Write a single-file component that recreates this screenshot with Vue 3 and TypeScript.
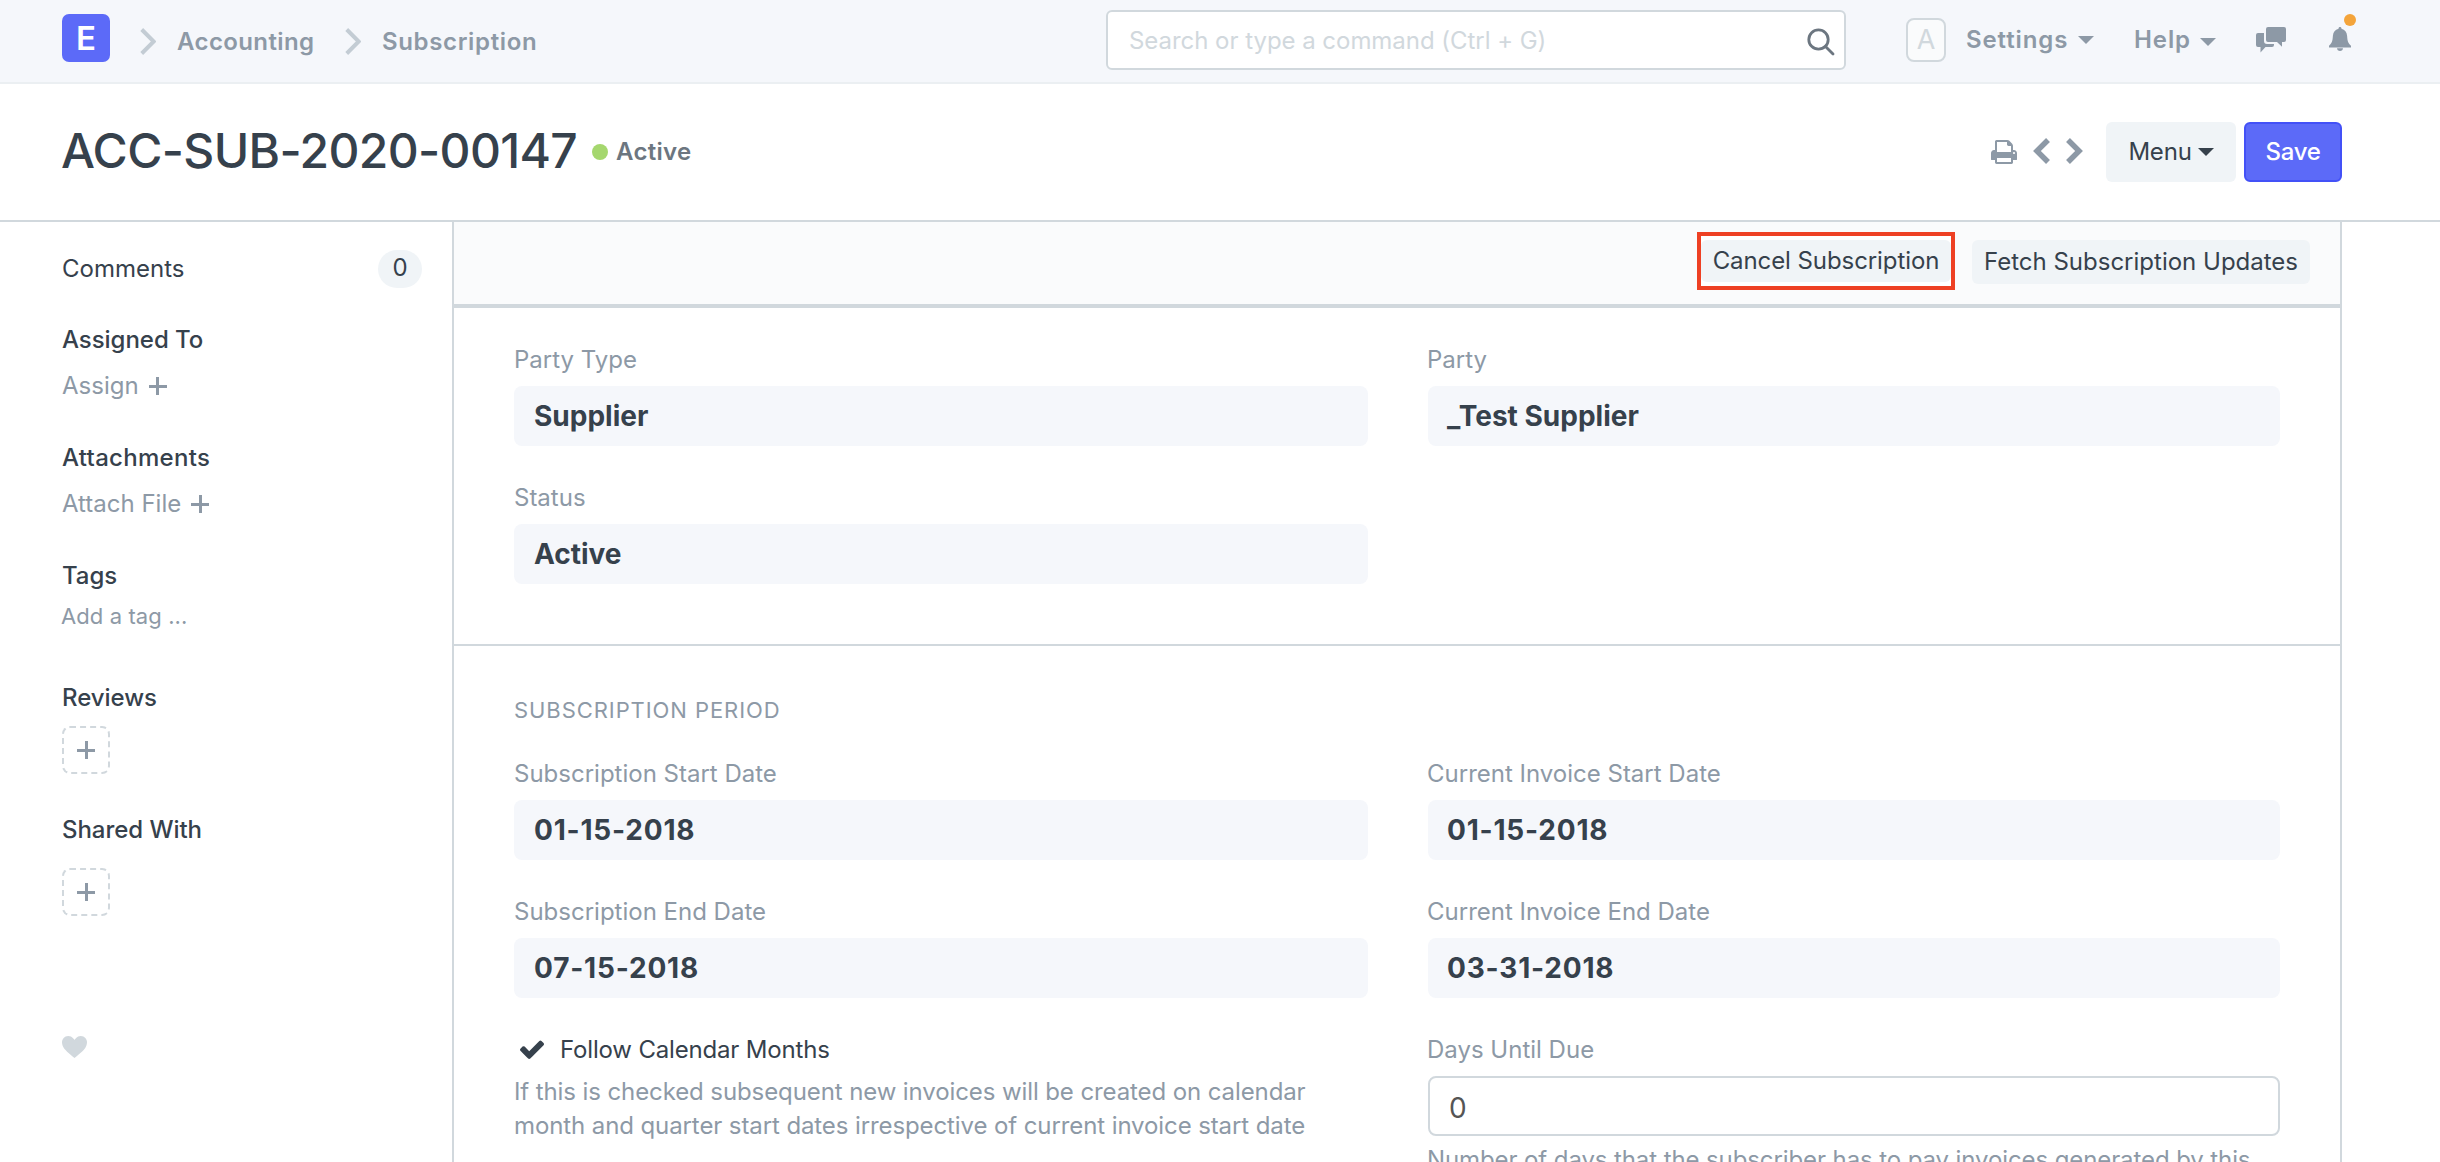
<script setup lang="ts">
interface Field {
  label: string
  value: string
}

const party: Field[] = [
  { label: 'Party Type', value: 'Supplier' },
  { label: 'Party', value: '_Test Supplier' },
  { label: 'Status', value: 'Active' },
]

const period: Field[] = [
  { label: 'Subscription Start Date', value: '01-15-2018' },
  { label: 'Current Invoice Start Date', value: '01-15-2018' },
  { label: 'Subscription End Date', value: '07-15-2018' },
  { label: 'Current Invoice End Date', value: '03-31-2018' },
]
</script>

<template>
  <div class="page">
    <header class="navbar">
      <div class="logo">E</div>
      <svg class="crumb-sep" width="16" height="27" viewBox="0 0 16 27"><path d="M1.700 1.500 13.700 13.500 1.700 25.500" /></svg>
      <a class="crumb first">Accounting</a>
      <svg class="crumb-sep" width="16" height="27" viewBox="0 0 16 27"><path d="M1.700 1.500 13.700 13.500 1.700 25.500" /></svg>
      <a class="crumb">Subscription</a>
      <div class="search">
        <span>Search or type a command (Ctrl + G)</span>
        <svg width="28" height="28" viewBox="0 0 28 28"><circle cx="11.500" cy="11.500" r="9.700" /><path d="M18.500 18.500 26 26" /></svg>
      </div>
      <nav class="tools">
        <span class="avatar">A</span>
        <span class="tool settings">Settings<i class="caret" /></span>
        <span class="tool help">Help<i class="caret low" /></span>
        <svg class="chat" width="30" height="26" viewBox="0 0 30 26">
          <path d="M12 0h16a2 2 0 0 1 2 2v11a2 2 0 0 1-2 2h-2v4.700L21 15h-9a2 2 0 0 1-2-2V2a2 2 0 0 1 2-2z" />
          <path d="M2 6h6v8a3 3 0 0 0 3 3h7v1a2 2 0 0 1-2 2h-6.500l-5 5.500V20H2a2 2 0 0 1-2-2V8a2 2 0 0 1 2-2z" />
        </svg>
        <span class="bell">
          <svg width="22" height="24" viewBox="0 0 22 24">
            <path d="M11 0c.9 0 1.500.7 1.500 1.700 3.400.8 5.300 3.500 5.600 7 .4 5.200.8 7.300 3.900 10v1.800H0v-1.800c3.100-2.700 3.500-4.800 3.900-10 .3-3.500 2.200-6.200 5.600-7C9.500.7 10.100 0 11 0z" />
            <path d="M8 21.200h6c0 1.600-1.300 2.800-3 2.800s-3-1.200-3-2.800z" />
          </svg>
          <i class="dot" />
        </span>
      </nav>
    </header>

    <div class="page-head">
      <h1>ACC-SUB-2020-00147</h1>
      <span class="status"><i />Active</span>
      <div class="actions">
        <svg class="print" width="26" height="24" viewBox="0 128 1664 1536"><path d="M384 1536h896v-256H384v256zm0-640h896V512h-160q-40 0-68-28t-28-68V256H384v640zm1152 64q0-26-19-45t-45-19-45 19-19 45 19 45 45 19 45-19 19-45zm128 0v416q0 13-9.500 22.500t-22.500 9.500h-224v160q0 40-28 68t-68 28H352q-40 0-68-28t-28-68v-160H32q-13 0-22.500-9.500T0 1376V960q0-79 56.500-135.500T192 768h64V224q0-40 28-68t68-28h672q40 0 88 20t76 48l152 152q28 28 48 76t20 88v256h64q79 0 135.500 56.500T1664 960z" /></svg>
        <svg class="prev" width="17" height="26" viewBox="0.500 3 6.500 10"><path d="M5.500 3 7 4.500 3.500 8 7 11.500 5.500 13l-5-5z" /></svg>
        <svg class="next" width="17" height="26" viewBox="0.500 3 6.500 10"><path d="M2 3 .5 4.500 4 8 .5 11.500 2 13l5-5z" /></svg>
        <button class="btn menu">Menu<i class="caret" /></button>
        <button class="btn save">Save</button>
      </div>
    </div>

    <div class="body">
      <aside class="sidebar">
        <div class="comments">Comments<span class="badge">0</span></div>
        <section class="block">
          <h4>Assigned To</h4>
          <a>Assign<i class="plus" /></a>
        </section>
        <section class="block attachments">
          <h4>Attachments</h4>
          <a>Attach File<i class="plus" /></a>
        </section>
        <section class="block tags">
          <h4>Tags</h4>
          <p>Add a tag ...</p>
        </section>
        <section class="block reviews">
          <h4>Reviews</h4>
          <div class="add"><i class="plus" /></div>
        </section>
        <section class="block shared">
          <h4>Shared With</h4>
          <div class="add"><i class="plus" /></div>
        </section>
        <svg class="heart" width="25" height="22" viewBox="0 2 12 11" preserveAspectRatio="none"><path d="M11.200 3c-.52-.63-1.250-.95-2.200-1-.97 0-1.690.42-2.200 1-.51.58-.78.92-.8 1-.02-.08-.28-.42-.8-1-.52-.58-1.170-1-2.200-1-.95.05-1.690.38-2.200 1-.52.61-.78 1.280-.8 2 0 .52.09 1.520.67 2.670C1.250 8.820 3.010 10.610 6 13c2.980-2.390 4.770-4.170 5.340-5.330C11.910 6.510 12 5.500 12 5c-.02-.72-.28-1.390-.8-2z" /></svg>
      </aside>

      <main class="form">
        <div class="toolbar">
          <div class="highlight"><button class="btn-sm">Cancel Subscription</button></div>
          <button class="btn-sm">Fetch Subscription Updates</button>
        </div>

        <section class="section first">
          <div class="grid">
            <div v-for="f in party" :key="f.label" class="field">
              <label>{{ f.label }}</label>
              <div class="value">{{ f.value }}</div>
            </div>
          </div>
        </section>

        <section class="section">
          <h6>SUBSCRIPTION PERIOD</h6>
          <div class="grid">
            <div v-for="f in period" :key="f.label" class="field">
              <label>{{ f.label }}</label>
              <div class="value">{{ f.value }}</div>
            </div>
            <div class="field">
              <div class="check">
                <svg width="24" height="19" viewBox="121 302 1550 1220"><path d="M1671 566q0 40-28 68l-724 724-136 136q-28 28-68 28t-68-28l-136-136-362-362q-28-28-28-68t28-68l136-136q28-28 68-28t68 28l294 295 656-657q28-28 68-28t68 28l136 136q28 28 28 68z" /></svg>
                <span>Follow Calendar Months</span>
              </div>
              <p class="hint">If this is checked subsequent new invoices will be created on calendar<br>month and quarter start dates irrespective of current invoice start date</p>
            </div>
            <div class="field">
              <label>Days Until Due</label>
              <div class="value input">0</div>
              <p class="hint near">Number of days that the subscriber has to pay invoices generated by this</p>
            </div>
          </div>
        </section>
      </main>
    </div>
  </div>
</template>

<style>
body { margin: 0; background: #fff; }
</style>

<style scoped>
* { box-sizing: border-box; }
.page {
  width: 2440px;
  height: 1162px;
  overflow: hidden;
  display: flex;
  flex-direction: column;
  font-family: Inter, "Noto Sans", sans-serif;
  font-size: 24px;
  line-height: 34px;
  color: #36414c;
  background: #fff;
}
h1, h4, h6, p { margin: 0; font-weight: 400; }
button { font: inherit; color: inherit; border: 0; padding: 0; }
svg { display: block; flex: none; fill: #8d99a6; }
i { display: block; flex: none; }

.navbar {
  flex: none;
  height: 84px;
  display: flex;
  align-items: center;
  padding-left: 62px;
  background: #f5f7fb;
  border-bottom: 2px solid #ebeff2;
  color: #8d99a6;
  font-weight: 600;
}
.logo {
  width: 48px;
  height: 48px;
  margin: 0 30px 6px 0;
  border-radius: 7px;
  background: #5c6af8;
  color: #fff;
  font-size: 33px;
  line-height: 48px;
  text-align: center;
}
.crumb-sep { fill: none; stroke: #c3ccd4; stroke-width: 4; }
.crumb { margin-left: 21px; padding-top: 2px; letter-spacing: .65px; white-space: nowrap; }
.crumb.first { width: 168px; letter-spacing: .4px; }
.search {
  width: 740px;
  height: 60px;
  margin: 0 60px 2px auto;
  padding: 2px 9px 0 21px;
  display: flex;
  align-items: center;
  justify-content: space-between;
  border: 2px solid #d1d8dd;
  border-radius: 6px;
  background: #fff;
  color: #d1d8dd;
  font-weight: 400;
  letter-spacing: -.04px;
}
.search svg { fill: none; stroke: #6c7680; stroke-width: 2.800; stroke-linecap: round; margin-top: 1px; }
.tools { width: 534px; height: 82px; display: flex; align-items: center; padding-bottom: 3px; }
.avatar {
  width: 40px;
  height: 44px;
  border: 2px solid #d1d8dd;
  border-radius: 8px;
  background: #fafbfc;
  color: #d1d8dd;
  font-size: 27px;
  font-weight: 400;
  line-height: 40px;
  text-align: center;
}
.tool { display: flex; align-items: center; justify-content: space-between; letter-spacing: .9px; }
.settings { margin-left: 20px; width: 128px; }
.help { margin-left: 40px; width: 82px; }
.caret { border: 8px solid transparent; border-top-color: currentColor; border-bottom: 0; }
.caret.low { margin-top: 5px; }
.chat { margin-left: 40px; }
.bell { position: relative; margin-left: 43px; margin-top: -2px; }
.dot {
  position: absolute;
  left: 15px;
  top: -13px;
  width: 12px;
  height: 12px;
  border-radius: 50%;
  background: #f4a43a;
}

.page-head {
  flex: none;
  height: 138px;
  display: flex;
  align-items: center;
  padding: 0 98px 0 61px;
  border-bottom: 2px solid #d1d8dd;
}
h1 {
  width: 531px;
  font-size: 48px;
  font-weight: 500;
  line-height: 60px;
  letter-spacing: -.65px;
  white-space: nowrap;
  margin-bottom: 3px;
}
.status {
  display: flex;
  align-items: center;
  gap: 8px;
  font-weight: 600;
  letter-spacing: .3px;
  color: #6c7680;
}
.status i { width: 16px; height: 16px; border-radius: 50%; background: #a5d76e; }
.actions { margin-left: auto; display: flex; align-items: center; }
.prev { margin-left: 16px; margin-bottom: 2px; }
.next { margin-left: 16px; margin-bottom: 2px; }
.btn { height: 60px; border-radius: 6px; display: flex; align-items: center; justify-content: center; }
.menu { width: 130px; margin-left: 23px; gap: 6px; background: #f0f4f7; letter-spacing: -.2px; }
.save {
  width: 98px;
  margin-left: 8px;
  background: #5c6af8;
  border: 2px solid #4351f7;
  color: #fff;
  font-weight: 500;
  letter-spacing: -.3px;
}

.body { flex: 1; min-height: 0; display: flex; }
.sidebar { width: 452px; padding: 28px 30px 0 62px; }
.comments { display: flex; align-items: center; justify-content: space-between; height: 38px; line-height: 32px; }
.badge { width: 44px; height: 38px; line-height: 36px; border-radius: 19px; background: #f0f4f7; text-align: center; }
.block { margin-top: 38px; }
.comments + .block { margin-top: 34px; }
h4 { font-size: 24px; font-weight: 500; letter-spacing: -.05px; height: 34px; line-height: 36px; }
.attachments h4 { letter-spacing: .3px; }
.block a { display: flex; align-items: center; gap: 10px; height: 34px; margin-top: 12px; line-height: 34px; padding-top: 2px; color: #8d99a6; }
.plus {
  width: 18px;
  height: 18px;
  background:
    linear-gradient(#8d99a6, #8d99a6) center / 18px 3px no-repeat,
    linear-gradient(#8d99a6, #8d99a6) center / 3px 18px no-repeat;
}
.tags p { margin: 7px 0 0 -1px; font-size: 22px; letter-spacing: .1px; color: #8d99a6; }
.reviews { margin-top: 47px; }
.add {
  width: 48px;
  height: 48px;
  margin-top: 12px;
  display: flex;
  align-items: center;
  justify-content: center;
  border: 2px dashed #d1d8dd;
  border-radius: 8px;
}
.shared .add { margin-top: 22px; }
.heart { margin-top: 120px; fill: #d1d8dd; }

.form { width: 1890px; border-left: 2px solid #d1d8dd; border-right: 2px solid #d1d8dd; }
.toolbar {
  height: 86px;
  display: flex;
  align-items: flex-start;
  justify-content: flex-end;
  padding: 10px 30px 0 0;
  background: #fafbfc;
  border-bottom: 4px solid #d1d8dd;
}
.btn-sm { display: block; width: 338px; height: 44px; margin-top: 8px; border-radius: 6px; background: #f0f4f7; white-space: nowrap; }
.highlight { width: 258px; height: 58px; margin-right: 17px; padding: 4px 0; border: 4px solid #ee4023; background: #fff; }
.highlight .btn-sm { width: 250px; height: 42px; margin: 0; letter-spacing: -.08px; }

.section { padding: 47px 60px 0; }
.section.first { padding: 34px 60px 60px; border-bottom: 2px solid #d1d8dd; }
h6 { font-size: 22px; letter-spacing: .93px; color: #8d99a6; margin-bottom: 29px; }
.grid { display: grid; grid-template-columns: 854px 852px; column-gap: 60px; row-gap: 34px; }
label { display: block; height: 34px; line-height: 36px; margin-bottom: 10px; color: #8d99a6; }
.value {
  height: 60px;
  padding: 0 20px;
  border-radius: 8px;
  background: #f5f7fb;
  font-size: 28px;
  font-weight: 700;
  line-height: 60px;
}
.section:not(.first) .value { letter-spacing: .8px; }
.field:nth-child(even) label { margin-left: -1px; }
.field:nth-child(even) .value { padding-left: 19px; }
.value.input { border: 2px solid #d1d8dd; background: #fff; font-weight: 400; line-height: 60px; color: #555; }
.check { display: flex; align-items: center; gap: 16px; height: 34px; padding-left: 6px; letter-spacing: -.17px; }
.check span { line-height: 34px; padding-top: 2px; }
.check svg { fill: #36414c; }
.hint { margin-top: 9px; color: #8d99a6; white-space: nowrap; letter-spacing: -.1px; }
.hint.near { margin-top: 7px; margin-left: -1px; }
</style>
